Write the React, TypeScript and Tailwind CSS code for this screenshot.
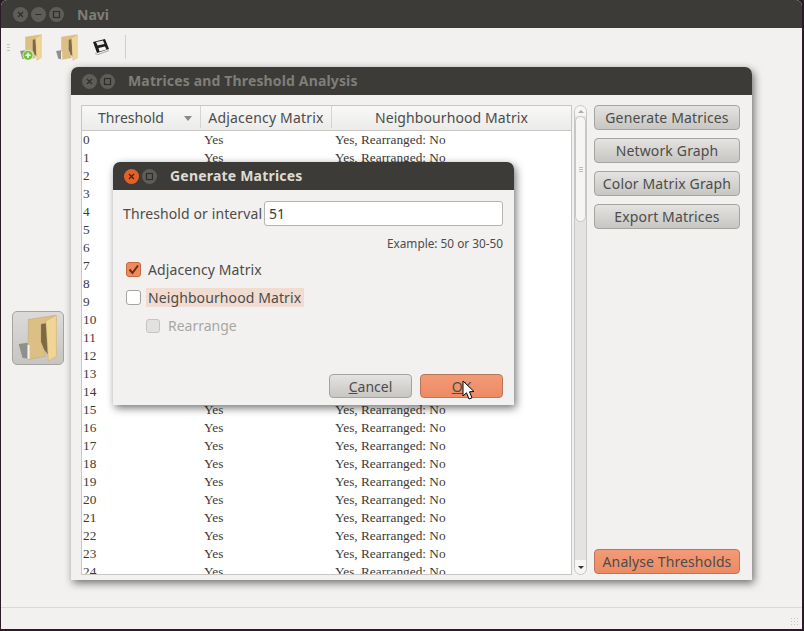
const ui = { fontFamily: '"Noto Sans", "Open Sans", sans-serif' };

function Folder({ width = 24, height = 27, plus = false }: { width?: number; height?: number; plus?: boolean }) {
  return (
    <svg width={width} height={height} viewBox="48 38 125 150">
      <path d="M50 132 L78 128 L78 178 L62 175 Z" fill="#8f8f8b" />
      <path d="M80 55 L165 42 L168 60 L135 66 L120 70 L120 125 L130 150 L135 170 L80 180 Z" fill="#dcbf85" stroke="#c2a46a" strokeWidth="1.5" />
      <path d="M120 70 L137 66 L142 165 L130 150 L120 125 Z" fill="#7d6a45" />
      <path d="M135 60 L168 42 L168 170 L143 185 Z" fill="#f0d595" stroke="#c9aa6c" strokeWidth="1.5" />
      <path d="M78 135 H84 V178 H78 Z" fill="#f5f5f0" />
      {plus && (
        <>
          <circle cx="94" cy="156" r="28" fill="#6fc23a" stroke="#e6f5d8" strokeWidth="5" />
          <path d="M94 142 V170 M80 156 H108" stroke="#fff" strokeWidth="9" />
        </>
      )}
    </svg>
  );
}

function Floppy() {
  return (
    <svg width="18" height="18" viewBox="0 0 18 18">
      <path d="M1 4 L13 1 L17 11 L5 15 Z" fill="#1c1c1c" />
      <path d="M4 4 L11 2.5 L12.5 6 L5.5 7.5 Z" fill="#e8e8e8" />
      <path d="M6.5 10 L13 8.5 L14.5 11.5 L7.5 13.5 Z" fill="#f5f5f5" />
      <path d="M3 15.5 L6 16.5 L17 12.5" stroke="#a8a8a8" strokeWidth="1" fill="none" />
    </svg>
  );
}

function WinBtn({ kind, active = false }: { kind: "x" | "min" | "max"; active?: boolean }) {
  return (
    <div className={`flex h-[15px] w-[15px] items-center justify-center rounded-full ${active ? "bg-[#e2612a]" : "bg-[#5e5d58]"}`}>
      <svg width="9" height="9" viewBox="0 0 9 9" fill="none" stroke={active ? "#4a2010" : "#2f2e2a"} strokeWidth="1.2">
        {kind === "x" && <path d="M2 2 L7 7 M7 2 L2 7" />}
        {kind === "min" && <path d="M1.5 4.5 H7.5" />}
        {kind === "max" && <rect x="1.5" y="1.5" width="6" height="6" />}
      </svg>
    </div>
  );
}

function GrayBtn({ label, orange = false }: { label: string; orange?: boolean }) {
  return (
    <button
      className={`flex h-[25px] w-[146px] items-center justify-center whitespace-nowrap rounded-[4px] border pb-[1px] text-[14px] text-[#4c4c4a] ${
        orange
          ? "border-[#b8775a] bg-gradient-to-b from-[#f39a76] to-[#ec8b64] tracking-[0.1px]"
          : "border-[#a5a4a0] bg-gradient-to-b from-[#e4e3e1] to-[#c7c6c3] tracking-[0.15px]"
      }`}
    >
      {label}
    </button>
  );
}

const rows = Array.from({ length: 25 }, (_, i) => i);

export default function App() {
  return (
    <div style={ui} className="relative h-[631px] w-[804px] overflow-hidden bg-[#2c1a26]">
      <div className="flex h-[629px] w-[801px] translate-x-[1px] flex-col overflow-hidden rounded-t-[6px] bg-[#f2f1f0]">
        <div className="flex h-[28px] shrink-0 items-center gap-[3px] bg-[#3c3b37] pl-[12px] pr-2">
          <WinBtn kind="x" />
          <WinBtn kind="min" />
          <WinBtn kind="max" />
          <span className="ml-[10px] text-[14px] font-bold text-[#7f7e79]">Navi</span>
        </div>
        <div className="flex h-[34px] shrink-0 items-center pl-[6px] pt-[4px]">
          <div className="flex w-[3px] flex-col gap-[2px]">
            <div className="h-px bg-[#c5c4c0]" />
            <div className="h-px bg-[#c5c4c0]" />
            <div className="h-px bg-[#c5c4c0]" />
          </div>
          <div className="ml-[9px]"><Folder plus /></div>
          <div className="ml-[12px]"><Folder /></div>
          <div className="ml-[13px]"><Floppy /></div>
          <div className="ml-[15px] h-[24px] w-px bg-[#d0cfcb]" />
        </div>
        <div className="flex flex-1 items-center pl-[11px] pt-[6px]">
          <div className="flex h-[54px] w-[52px] items-center justify-center rounded-[5px] border border-[#a5a4a0] bg-gradient-to-b from-[#dcdbd9] to-[#c6c5c2]">
            <Folder width={40} height={48} />
          </div>
        </div>
        <div className="relative h-[22px] shrink-0 border-t border-[#dad9d5]">
          <div className="absolute bottom-[2px] right-[2px] h-[10px] w-[10px] bg-[radial-gradient(#c9c8c4_1px,transparent_1px)] bg-[length:3px_3px]" />
        </div>
      </div>

      {/* Matrices window */}
      <div className="absolute left-[71px] top-[67px] flex h-[513px] w-[681px] flex-col overflow-hidden rounded-t-[7px] bg-[#f2f1f0] shadow-[2px_3px_8px_rgba(0,0,0,0.55)]">
        <div className="flex h-[28px] shrink-0 items-center gap-[3px] bg-[#3c3b37] pl-[11px]">
          <WinBtn kind="x" />
          <WinBtn kind="max" />
          <span className="ml-[10px] pb-[2px] text-[14px] font-bold tracking-[0.15px] text-[#7f7e79]">Matrices and Threshold Analysis</span>
        </div>
        <div className="flex min-h-0 flex-1 pb-[5px] pl-[10px] pr-[12px] pt-[10px]">
          <div className="flex w-[491px] flex-col overflow-hidden border border-[#c8c7c3] bg-white">
            <div className="flex h-[25px] shrink-0 border-b border-[#c8c7c3] bg-gradient-to-b from-[#f8f8f7] to-[#ecebe9] pb-[2px] text-[14px] text-[#4c4c4a]">
              <div className="relative flex w-[119px] items-center border-r border-[#d5d4d0] pl-[16px]">
                Threshold
                <div className="absolute left-[102px] top-[10px] h-0 w-0 border-x-[4px] border-t-[5px] border-x-transparent border-t-[#8a8986]" />
              </div>
              <div className="flex w-[131px] items-center justify-center whitespace-nowrap border-r border-[#d5d4d0] tracking-[0.2px]">Adjacency Matrix</div>
              <div className="flex flex-1 items-center justify-center tracking-[0.1px]">Neighbourhood Matrix</div>
            </div>
            <div className="font-['Liberation_Serif',serif] text-[13.3px] text-[#3c3b37]">
              {rows.map((r) => (
                <div key={r} className="flex h-[18px] items-center">
                  <div className="w-[122px] pl-[1px]">{r}</div>
                  <div className="w-[131px]">Yes</div>
                  <div>Yes, Rearranged: No</div>
                </div>
              ))}
            </div>
          </div>
          <div className="ml-[2px] flex w-[13px] flex-col overflow-hidden rounded-full border border-[#c8c7c3] bg-[#e4e3e1]">
            <div className="flex h-[10px] shrink-0 items-center justify-center bg-[#f6f5f4]">
              <div className="h-0 w-0 border-x-[3px] border-b-[3px] border-x-transparent border-b-[#aaa]" />
            </div>
            <div className="flex h-[106px] shrink-0 flex-col items-center justify-center gap-[1px] rounded-full border border-[#c8c7c3] bg-[#f6f5f4]">
              <div className="h-px w-[4px] bg-[#bbb]" />
              <div className="h-px w-[4px] bg-[#bbb]" />
              <div className="h-px w-[4px] bg-[#bbb]" />
            </div>
            <div className="flex-1" />
            <div className="flex h-[14px] shrink-0 items-center justify-center rounded-b-full bg-[#f6f5f4]">
              <div className="h-0 w-0 border-x-[3px] border-t-[3px] border-x-transparent border-t-[#333]" />
            </div>
          </div>
          <div className="ml-[7px] flex flex-col">
            <div className="flex flex-col gap-[8px]">
              <GrayBtn label="Generate Matrices" />
              <GrayBtn label="Network Graph" />
              <GrayBtn label="Color Matrix Graph" />
              <GrayBtn label="Export Matrices" />
            </div>
            <div className="flex-1" />
            <div className="pb-[1px]">
              <GrayBtn label="Analyse Thresholds" orange />
            </div>
          </div>
        </div>
      </div>

      {/* Generate dialog */}
      <div className="absolute left-[113px] top-[162px] flex h-[243px] w-[401px] flex-col overflow-hidden rounded-t-[7px] bg-[#f2f1f0] shadow-[2px_3px_8px_rgba(0,0,0,0.55)]">
        <div className="flex h-[28px] shrink-0 items-center gap-[3px] bg-[#3c3b37] pl-[11px]">
          <WinBtn kind="x" active />
          <WinBtn kind="max" />
          <span className="ml-[10px] pb-[2px] text-[14px] font-bold tracking-[0.2px] text-[#dfdbd2]">Generate Matrices</span>
        </div>
        <div className="flex flex-1 flex-col pl-[10px] pr-[11px] pt-[11px] text-[14px] text-[#4c4c4a]">
          <div className="flex h-[25px] items-center">
            <span className="whitespace-nowrap tracking-[0.1px]">Threshold or interval</span>
            <div className="ml-auto flex h-[25px] w-[239px] items-center rounded-[3px] border border-[#b5b4b0] bg-white pl-[4px] text-[#3c3b37]">51</div>
          </div>
          <div className="mt-[9px] text-right text-[11.8px] text-[#4c4c4a]">Example: 50 or 30-50</div>
          <div className="mt-[7px] flex h-[20px] items-center pl-[3px]">
            <div className="flex h-[15px] w-[15px] items-center justify-center rounded-[3px] border border-[#c46a42] bg-[#ef8a5e]">
              <svg width="13" height="13" viewBox="0 0 13 13" fill="none" stroke="#6b2c12" strokeWidth="2"><path d="M2.5 6.5 L5.5 10 L11 2.5" /></svg>
            </div>
            <span className="ml-[7px] tracking-[0.1px]">Adjacency Matrix</span>
          </div>
          <div className="mt-[8px] flex h-[20px] items-center pl-[3px]">
            <div className="h-[15px] w-[15px] rounded-[3px] border border-[#a5a4a0] bg-white" />
            <span className="ml-[5px] flex h-[19px] items-center bg-[#f1dcd2] pl-[2px] pr-[3px] tracking-[0.1px]">Neighbourhood Matrix</span>
          </div>
          <div className="mt-[8px] flex h-[20px] items-center pl-[23px] text-[#a8a7a3]">
            <div className="h-[14px] w-[14px] rounded-[3px] border border-[#c5c4c0] bg-[#e2e1df]" />
            <span className="ml-[8px]">Rearrange</span>
          </div>
          <div className="flex-1" />
          <div className="flex justify-end gap-[8px] pb-[7px]">
            <button className="flex h-[24px] w-[83px] items-center justify-center rounded-[4px] border border-[#a5a4a0] bg-gradient-to-b from-[#e4e3e1] to-[#c7c6c3]">
              <span><span className="underline">C</span>ancel</span>
            </button>
            <button className="flex h-[24px] w-[83px] items-center justify-center rounded-[4px] border border-[#b8775a] bg-gradient-to-b from-[#f39a76] to-[#ec8b64]">
              <span className="underline">O</span>K
            </button>
          </div>
        </div>
      </div>

      {/* Cursor */}
      <svg className="absolute left-[462px] top-[380px]" width="15" height="22" viewBox="0 0 15 22">
        <path d="M1 1 L1 16 L4.5 12.8 L7 19 L10 17.8 L7.5 11.8 L12 11.5 Z" fill="#fff" stroke="#000" strokeWidth="1" />
      </svg>
    </div>
  );
}
